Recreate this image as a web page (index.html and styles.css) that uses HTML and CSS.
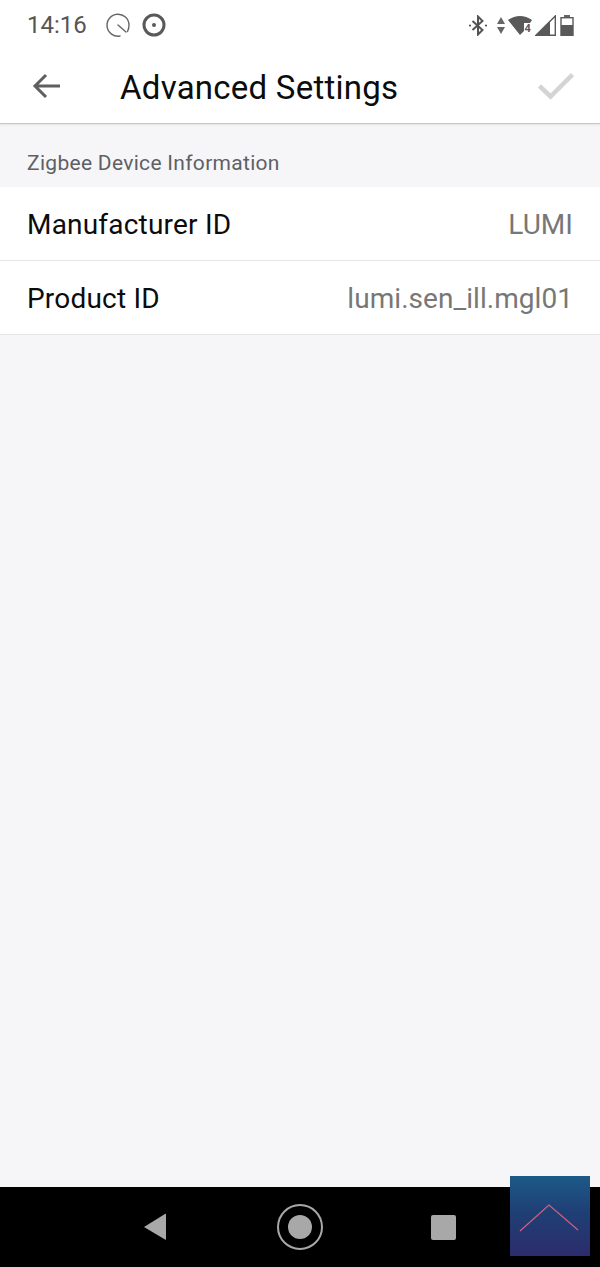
FILE: index.html
```html
<!DOCTYPE html>
<html lang="en">
<head>
    <meta charset="UTF-8">
    <meta name="viewport" content="width=device-width, initial-scale=1.0">
    <title>Advanced Settings</title>
    <link rel="stylesheet" href="styles.css">
</head>
<body>
    <div class="pantalla">
        <div class="barra-estado">
            <span class="hora">14:16</span>
            <svg class="icono-reloj" width="26" height="26" viewBox="0 0 26 26" fill="none" stroke="#666" stroke-width="1.4">
                <path d="M15 24 A11 11 0 1 1 24 13 Q24 17 22.500 19.500" stroke-linecap="round"></path>
                <path d="M13 13 L21 20" stroke-linecap="round"></path>
            </svg>
            <svg class="icono-punto" width="26" height="26" viewBox="0 0 26 26" fill="none">
                <circle cx="13" cy="13" r="10" stroke="#595959" stroke-width="3"></circle>
                <circle cx="13" cy="13" r="2" fill="#595959"></circle>
            </svg>
            <div class="iconos-der">
                <svg width="18" height="21" viewBox="0 0 18 21" fill="none" stroke="#555" stroke-width="2">
                    <path d="M3.500 6 L13.500 15 L9 19.500 V1.500 L13.500 6 L3.500 15"></path>
                    <circle cx="1" cy="10.500" r="1.100" fill="#555" stroke="none"></circle>
                    <circle cx="17" cy="10.500" r="1.100" fill="#555" stroke="none"></circle>
                </svg>
                <svg class="flechas" width="8" height="17" viewBox="0 0 8 17" fill="#666">
                    <polygon points="4,0 8,7 0,7"></polygon>
                    <polygon points="0,10 8,10 4,17"></polygon>
                </svg>
                <svg class="wifi" width="24" height="20" viewBox="0 0 24 20">
                    <path d="M0 5 Q12 -3 24 5 L22 8 H16 V16 L12 20 Z" fill="#595959"></path>
                    <text x="16.500" y="17" class="wifi-num">4</text>
                </svg>
                <svg class="senal" width="21" height="21" viewBox="0 0 21 21">
                    <polygon points="20.300,1 20.300,20.300 1,20.300" fill="none" stroke="#595959" stroke-width="1.400"></polygon>
                    <polygon points="15,6 15,21 0,21" fill="#595959"></polygon>
                </svg>
                <svg class="bateria" width="14" height="21" viewBox="0 0 14 21">
                    <rect x="4" y="0" width="6" height="3" fill="#666"></rect>
                    <rect x="1" y="2.700" width="12" height="17.600" fill="none" stroke="#595959" stroke-width="1.400"></rect>
                    <rect x="1" y="10" width="12" height="11" fill="#595959"></rect>
                </svg>
            </div>
        </div>
        <div class="cabecera">
            <svg class="volver" width="30" height="28" viewBox="0 0 30 28" fill="none" stroke="#5f5f5f" stroke-width="3">
                <path d="M28 14 H3 M14 3 L3 14 L14 25"></path>
            </svg>
            <div class="titulo">Advanced Settings</div>
            <svg class="confirmar" width="36" height="28" viewBox="0 0 36 28" fill="none" stroke="#d4d4d4" stroke-width="4.500">
                <path d="M1.500 14 L12.500 24.500 L34.500 2.500"></path>
            </svg>
        </div>
        <div class="contenido">
            <div class="seccion">Zigbee Device Information</div>
            <div class="fila">
                <span class="etiqueta">Manufacturer ID</span>
                <span class="valor">LUMI</span>
            </div>
            <div class="fila">
                <span class="etiqueta">Product ID</span>
                <span class="valor">lumi.sen_ill.mgl01</span>
            </div>
        </div>
        <div class="navegacion">
            <svg width="26" height="28" viewBox="0 0 26 28" fill="#a8a8a8">
                <path d="M23 1 V26 Q23 27 22 26.500 L1 14 L22 1 Q23 0.500 23 1 Z"></path>
            </svg>
            <svg width="46" height="46" viewBox="0 0 46 46" fill="none">
                <circle cx="23" cy="23" r="22" stroke="#a8a8a8" stroke-width="2"></circle>
                <circle cx="23" cy="23" r="12" fill="#a8a8a8"></circle>
            </svg>
            <div class="cuadro"></div>
        </div>
        <div class="boton-arriba">
            <svg width="80" height="80" viewBox="0 0 80 80" fill="none" stroke="#d0607f" stroke-width="1.200">
                <path d="M10 55 L39 29 L68 54"></path>
            </svg>
        </div>
    </div>
</body>
</html>
```

FILE: styles.css
```css
* {
    box-sizing: border-box;
}
body {
    margin: 0;
    font-family: Roboto, "Liberation Sans", sans-serif;
    background-color: #f6f6f8;
}
.pantalla {
    position: relative;
    display: flex;
    flex-direction: column;
    width: 600px;
    height: 1267px;
    overflow: hidden;
}
.barra-estado {
    display: flex;
    align-items: center;
    height: 50px;
    padding: 0 26px 0 27px;
    background-color: #fff;
}
.hora {
    font-size: 24px;
    color: #555;
}
.icono-reloj {
    margin-left: 18px;
}
.icono-punto {
    margin-left: 10px;
}
.iconos-der {
    display: flex;
    align-items: center;
    margin-left: auto;
}
.flechas {
    margin-left: 10px;
}
.wifi {
    margin-left: 3px;
}
.senal {
    margin-left: 3px;
}
.bateria {
    margin-left: 4px;
}
.wifi-num {
    font-size: 11px;
    font-weight: 700;
    fill: #595959;
}
.cabecera {
    display: flex;
    align-items: center;
    height: 74px;
    padding: 0 26px 1px 32px;
    background-color: #fff;
    border-bottom: 1px solid #c6c6c6;
    box-shadow: 0 1px 2px rgba(0, 0, 0, 0.08);
}
.titulo {
    margin-left: 58px;
    padding-top: 3px;
    font-size: 33px;
    color: #0c0c0c;
    letter-spacing: 0.25px;
}
.confirmar {
    margin-left: auto;
}
.contenido {
    flex: 1;
}
.seccion {
    height: 63px;
    padding: 26px 27px 0;
    font-size: 21px;
    line-height: 26px;
    color: #5f5f66;
    letter-spacing: 0.3px;
}
.fila {
    display: flex;
    justify-content: space-between;
    align-items: center;
    height: 74px;
    padding: 2px 27px 0;
    background-color: #fff;
    border-bottom: 1px solid #e6e6e6;
}
.etiqueta {
    font-size: 28px;
    color: #0c0c0c;
    letter-spacing: 0.2px;
}
.valor {
    font-size: 28px;
    color: #777;
    letter-spacing: 0.05px;
}
.navegacion {
    display: flex;
    justify-content: space-between;
    align-items: center;
    height: 80px;
    padding: 0 144px 0 143px;
    background-color: #000;
}
.cuadro {
    width: 25px;
    height: 25px;
    border-radius: 2px;
    background-color: #a8a8a8;
}
.boton-arriba {
    position: absolute;
    left: 510px;
    top: 1176px;
    width: 80px;
    height: 80px;
    background: linear-gradient(180deg, #1d5a88 0%, #1f3f75 45%, #2c2c6c 100%);
}
```
